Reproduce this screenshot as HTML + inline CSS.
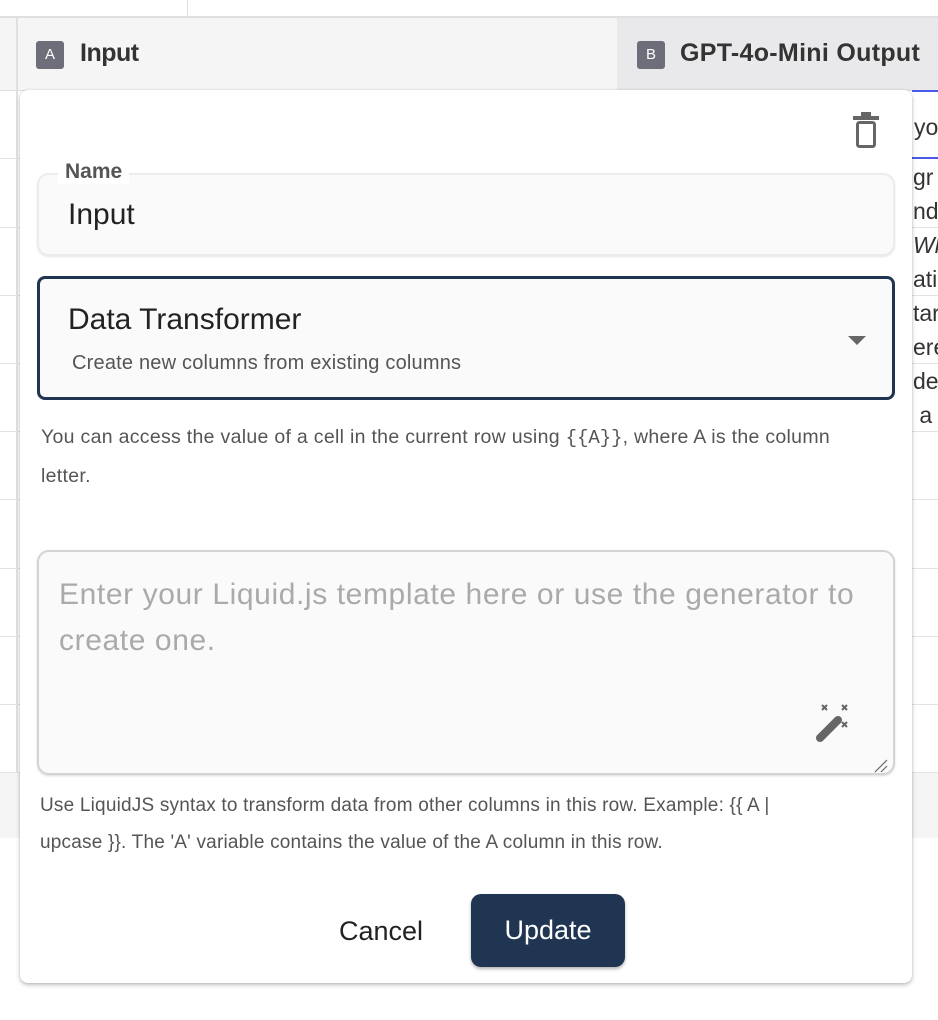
<!DOCTYPE html>
<html><head><style>
*{box-sizing:border-box;margin:0;padding:0}
body{width:938px;height:1020px;overflow:hidden;background:#fff;font-family:"Liberation Sans",sans-serif;position:relative}
.abs{position:absolute}
.hl{position:absolute;height:1px;background:#e3e3e3}
</style></head><body>
<div class="abs" style="left:187px;top:0;width:1px;height:17px;background:#e0e0e0"></div>
<div class="abs" style="left:0;top:16px;width:938px;height:2px;background:#e0e0e0"></div>
<div class="abs" style="left:0;top:18px;width:617px;height:72px;background:#f5f5f5"></div>
<div class="abs" style="left:617px;top:18px;width:321px;height:72px;background:#e9e9eb"></div>
<div class="abs" style="left:0;top:90px;width:938px;height:1px;background:#ddd"></div>
<div class="abs" style="left:16px;top:18px;width:2px;height:820px;background:#e0e0e0"></div>
<div class="abs" style="left:36px;top:41px;width:28px;height:28px;background:#6e6e7a;border-radius:3px;color:#fff;font-size:15px;text-align:center;line-height:28px">A</div>
<div class="abs" style="left:80px;top:39px;font-size:25px;font-weight:bold;color:#333;letter-spacing:-.5px">Input</div>
<div class="abs" style="left:637px;top:41px;width:28px;height:28px;background:#6e6e7a;border-radius:3px;color:#fff;font-size:15px;text-align:center;line-height:28px">B</div>
<div class="abs" style="left:680px;top:39px;font-size:25px;font-weight:bold;color:#333;white-space:nowrap;letter-spacing:.3px">GPT-4o-Mini Output</div>
<div class="hl" style="left:0;top:158px;width:20px"></div>
<div class="hl" style="left:0;top:227px;width:938px"></div>
<div class="hl" style="left:0;top:295px;width:938px"></div>
<div class="hl" style="left:0;top:363px;width:938px"></div>
<div class="hl" style="left:0;top:431px;width:938px"></div>
<div class="hl" style="left:0;top:499px;width:938px"></div>
<div class="hl" style="left:0;top:568px;width:938px"></div>
<div class="hl" style="left:0;top:636px;width:938px"></div>
<div class="hl" style="left:0;top:704px;width:938px"></div>
<div class="hl" style="left:0;top:772px;width:938px"></div>
<div class="abs" style="left:0;top:773px;width:938px;height:65px;background:#f5f5f5"></div>
<div class="abs" style="left:912px;top:90px;width:26px;height:2px;background:#4a5be8"></div>
<div class="abs" style="left:912px;top:157px;width:26px;height:2px;background:#4a5be8"></div>
<div class="abs" style="left:914px;top:108px;font-size:23px;color:#333;line-height:38px;white-space:nowrap">yo</div>
<div class="abs" style="left:913px;top:160px;font-size:23px;color:#333;line-height:34px;white-space:nowrap">gr<br>nd<br><i>Wh</i><br>ati<br>tar<br>ere<br>de<br>&nbsp;a</div>

<div class="abs" style="left:20px;top:90px;width:892px;height:893px;background:#fff;border-radius:8px;box-shadow:0 2px 4px rgba(0,0,0,.25),0 0 2px rgba(0,0,0,.1)">
<svg class="abs" style="left:833px;top:21px" width="26" height="38" viewBox="0 0 26 38"><rect x="0" y="5" width="26" height="4" fill="#666"/><rect x="8" y="1" width="10" height="5" fill="#666"/><rect x="4.5" y="11.5" width="17" height="24" rx="2" fill="none" stroke="#666" stroke-width="3"/></svg>
<div class="abs" style="left:17px;top:83px;width:858px;height:83px;background:#fafafa;border:2px solid #ececec;border-radius:12px;box-shadow:0 1px 2px rgba(0,0,0,.1)"></div>
<div class="abs" style="left:38px;top:70px;padding:0 7px;background:#fff;font-size:21px;font-weight:bold;color:#555">Name</div>
<div class="abs" style="left:48px;top:108px;font-size:30px;color:#222">Input</div>
<div class="abs" style="left:17px;top:186px;width:858px;height:124px;background:#fafafa;border:3px solid #1f3552;border-radius:8px"></div>
<div class="abs" style="left:48px;top:213px;font-size:30px;color:#222">Data Transformer</div>
<div class="abs" style="left:52px;top:262px;font-size:20px;color:#555;letter-spacing:.2px">Create new columns from existing columns</div>
<div class="abs" style="left:828px;top:246px;width:0;height:0;border-left:9px solid transparent;border-right:9px solid transparent;border-top:9px solid #666"></div>
<div class="abs" style="left:21px;top:328px;width:800px;font-size:19.5px;color:#555;line-height:38px;letter-spacing:.3px">You can access the value of a cell in the current row using <span style="font-family:'Liberation Mono',monospace;font-size:19px;letter-spacing:0">{{A}}</span>, where A is the column letter.</div>
<div class="abs" style="left:17px;top:460px;width:858px;height:225px;background:#fafafa;border:2px solid #d4d4d4;border-radius:12px;box-shadow:0 1px 2px rgba(0,0,0,.15)"></div>
<div class="abs" style="left:39px;top:482px;width:830px;font-size:30px;color:#aaa;line-height:46px;letter-spacing:.6px">Enter your Liquid.js template here or use the generator to create one.</div>
<svg class="abs" style="left:796px;top:610px" width="46" height="46" viewBox="0 0 46 46"><path d="M4 38 L22 20" stroke="#666" stroke-width="8" stroke-linecap="round"/><path d="M6 5l5 5M11 5l-5 5M26 5l5 5M31 5l-5 5M26 22l5 5M31 22l-5 5" stroke="#666" stroke-width="2"/></svg>
<svg class="abs" style="left:853px;top:668px" width="16" height="16"><path d="M2 14L14 2M8 14L14 8" stroke="#666" stroke-width="1.2"/></svg>
<div class="abs" style="left:20px;top:697px;width:775px;font-size:19px;color:#555;line-height:37px;letter-spacing:.2px">Use LiquidJS syntax to transform data from other columns in this row. Example: {{ A | upcase }}. The 'A' variable contains the value of the A column in this row.</div>
<div class="abs" style="left:319px;top:826px;font-size:27px;color:#222">Cancel</div>
<div class="abs" style="left:451px;top:804px;width:154px;height:73px;background:#1f3552;border-radius:10px;color:#fff;font-size:27px;text-align:center;line-height:73px;box-shadow:0 2px 3px rgba(0,0,0,.3)">Update</div>
</div>
</body></html>
